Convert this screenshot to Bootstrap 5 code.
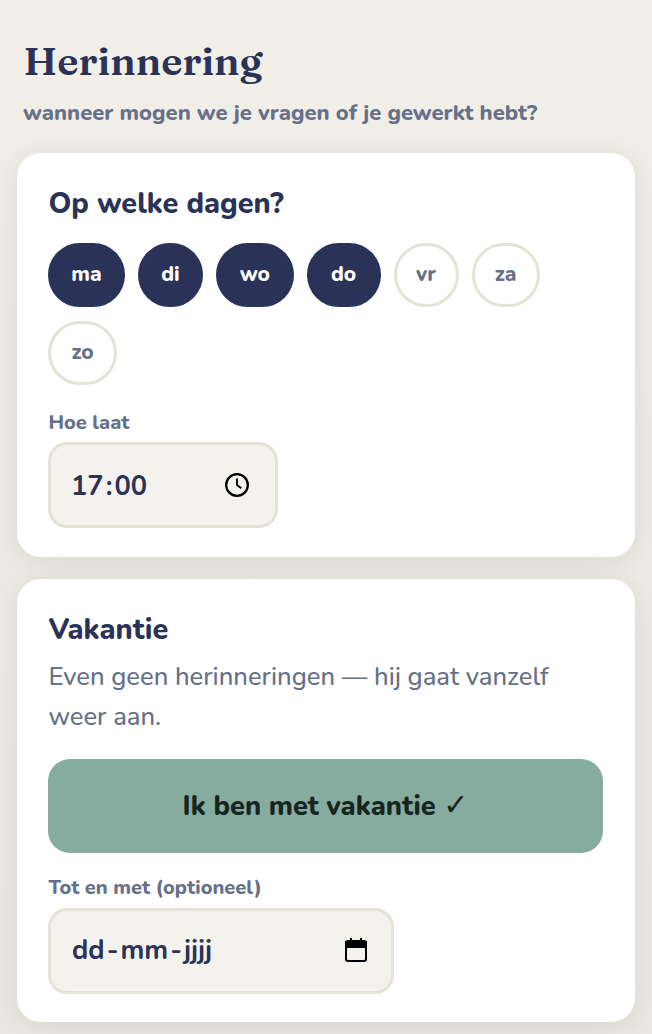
<!DOCTYPE html>
<html lang="nl"><head><meta charset="utf-8">
<link href="https://cdn.jsdelivr.net/npm/bootstrap@5.3.0/dist/css/bootstrap.min.css" rel="stylesheet">
<style>
html,body{height:100%}
body{background:linear-gradient(180deg,#f2efe8,#ebe8e1);font-family:"Nunito","Noto Sans","Open Sans",sans-serif;color:#2a3357;overflow:hidden}
.page-wrap{padding:36px 17px 0}
.title-h{font-family:"Fraunces","Liberation Serif",serif;font-weight:650;font-size:39.6px;line-height:50px;color:#2a3357;margin:0 0 12px 6.5px}
.sub-h{font-weight:800;font-size:22px;line-height:30px;color:#667089;margin:0 0 25px 6px}
.panel{background:#fff;border-radius:24px;padding:32px 32px 29px 31px;box-shadow:0 4px 28px rgba(40,52,90,.1);margin-bottom:22px}
.panel-b{padding-bottom:28px}
.panel-t{font-weight:800;font-size:28.8px;line-height:37px;color:#2a3357;margin:0 0 0 .4px}
.pill-row{gap:14px 13px;margin-top:21px}
.pill-d{height:64px;border-radius:32px;font-weight:800;font-size:21px;border:3px solid #e5e3d8;color:#667089;background:#fff}
.pill-d.on{background:#2a3357;border-color:#2a3357;color:#fff}
.pw-65{width:65px}.pw-68{width:68px}.pw-69{width:69px}.pw-74{width:74px}.pw-77{width:77px}.pw-78{width:77.5px}
.lbl{font-weight:800;font-size:20px;line-height:26px;color:#667089;margin-left:.4px}
.lbl-time{margin-top:24.5px;margin-bottom:6px}
.lbl-date{margin-top:22px;margin-bottom:7px}
.fld{background:#f4f2ec;border:3px solid #e5e3d8;border-radius:19px;height:86px;font-weight:700;font-size:27.2px;color:#2a3357;padding:0 23px 0 21px}
.fld-time{width:230px;padding:0 25px 0 20px}
.fld-date{width:346px}
.val-time{padding-top:5px}
.val-date{padding-top:2px}
.sep{margin:0 2px}
.fld-icon{margin-top:-1px}
.desc{font-size:25.6px;line-height:40px;color:#667089;font-weight:500;margin:9px 0 0 .4px}
.vac{background:#86ac9f;border:0;border-radius:22px;height:94px;margin-top:22px;padding-top:9px;font-weight:800;font-size:27.2px;color:#17251f}
.vac:hover{background:#86ac9f;color:#17251f}
.chk{font-family:"Noto Sans Symbols","Noto Sans Symbols2","DejaVu Sans",sans-serif;font-weight:400;font-size:30px;line-height:1}
</style></head><body>
<div class="page-wrap">
<h1 class="title-h">Herinnering</h1>
<p class="sub-h">wanneer mogen we je vragen of je gewerkt hebt?</p>
<div class="panel">
<h2 class="panel-t">Op welke dagen?</h2>
<div class="d-flex flex-wrap pill-row"><span class="pill-d on pw-77 d-flex align-items-center justify-content-center">ma</span><span class="pill-d on pw-65 d-flex align-items-center justify-content-center">di</span><span class="pill-d on pw-78 d-flex align-items-center justify-content-center">wo</span><span class="pill-d on pw-74 d-flex align-items-center justify-content-center">do</span><span class="pill-d pw-65 d-flex align-items-center justify-content-center">vr</span><span class="pill-d pw-68 d-flex align-items-center justify-content-center">za</span><span class="pill-d pw-69 d-flex align-items-center justify-content-center">zo</span></div>
<div class="lbl lbl-time">Hoe laat</div>
<div class="fld fld-time d-flex align-items-center justify-content-between"><span class="val-time">17<span class="sep">:</span>00</span>
<svg width="26" height="26" viewBox="0 0 24 24" fill="none" stroke="#000" stroke-width="2.1"><circle cx="12" cy="12" r="10"/><path d="M12 6V12l4 3" stroke-width="1.7"/></svg></div>
</div>
<div class="panel panel-b">
<h2 class="panel-t">Vakantie</h2>
<p class="desc">Even geen herinneringen — hij gaat vanzelf weer aan.</p>
<button class="btn vac w-100" type="button">Ik ben met vakantie <span class="chk">✓</span></button>
<div class="lbl lbl-date">Tot en met (optioneel)</div>
<div class="fld fld-date d-flex align-items-center justify-content-between"><span class="val-date">dd<span class="sep">-</span>mm<span class="sep">-</span>jjjj</span>
<svg class="fld-icon" width="24" height="26" viewBox="0 0 24 26" fill="none" stroke="#000" stroke-width="2"><rect x="2" y="4" width="20" height="20" rx="2"/><path d="M2 5h20v5H2z" fill="#000"/><path d="M7 1v4M17 1v4"/></svg></div>
</div>
</div>
<script src="https://cdn.jsdelivr.net/npm/bootstrap@5.3.0/dist/js/bootstrap.bundle.min.js"></script>
</body></html>
